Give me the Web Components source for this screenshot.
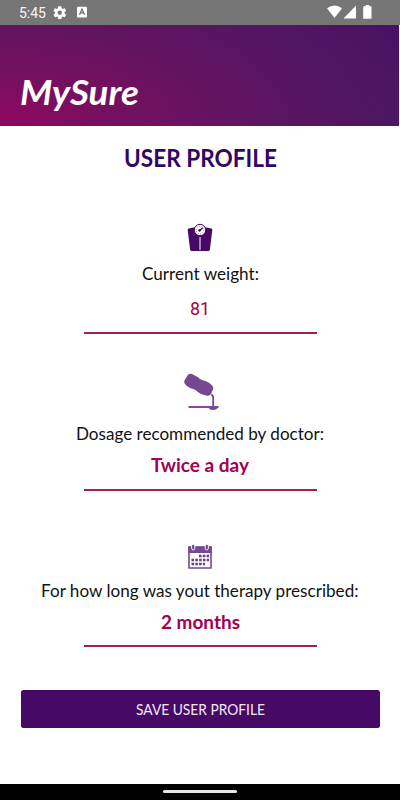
<!DOCTYPE html>
<html lang="en">
<head>
<meta charset="UTF-8">
<meta name="viewport" content="width=device-width, initial-scale=1">
<title>MySure</title>
<style>
    body {
        margin: 0;
        background: #fff;
        font-family: Lato, "Open Sans", sans-serif;
    }
</style>
</head>
<body>
<profile-screen></profile-screen>

<script>
// One line of centred text, condensed to a given width
class FitText extends HTMLElement {
    connectedCallback() {
        this.attachShadow({ mode: 'open' });
        const width = Number(this.getAttribute('width'));
        const height = Number(this.getAttribute('height'));
        const base = this.getAttribute('base');
        this.shadowRoot.innerHTML = `
            <style>
                :host { display: block; height: ${height}px; }
                svg { display: block; margin: 0 auto; overflow: visible; }
                text { fill: currentColor; }
            </style>
            <svg width="${width}" height="${height}">
                <text x="0" y="${base}" textLength="${width}" lengthAdjust="spacingAndGlyphs">${this.getAttribute('text')}</text>
            </svg>
        `;
    }
}

class StatusBar extends HTMLElement {
    connectedCallback() {
        this.attachShadow({ mode: 'open' });
        this.shadowRoot.innerHTML = `
            <style>
                :host {
                    display: flex;
                    height: 24.5px;
                    box-sizing: border-box;
                    padding: 0 28px 0 19px;
                    justify-content: space-between;
                    align-items: center;
                    background: #767676;
                    color: #fff;
                    font: 14.3px/24px Roboto, sans-serif;
                }
                .side { display: flex; align-items: center; height: 24px; }
                svg { display: block; fill: #fff; }
                .gear { margin-left: 6.5px; }
                .badge { margin-left: 11px; }
                fit-text { color: #f4f4f4; }
            </style>
            <div class="side">
                <fit-text width="27" height="24" base="18" text="5:45"></fit-text>
                <svg class="gear" width="13.5" height="13.5" viewBox="2 2 20 20"><path fill-rule="evenodd" d="M19.14 12.94a7 7 0 0 0 0-1.88l2.03-1.58a.5.5 0 0 0 .12-.61l-1.92-3.32a.5.5 0 0 0-.59-.22l-2.39.96a7 7 0 0 0-1.62-.94l-.36-2.54a.5.5 0 0 0-.48-.41h-3.84a.5.5 0 0 0-.47.41l-.36 2.54a7.4 7.4 0 0 0-1.62.94l-2.39-.96a.5.5 0 0 0-.59.22L2.74 8.87a.5.5 0 0 0 .12.61l2.03 1.58a7 7 0 0 0 0 1.88l-2.03 1.58a.5.5 0 0 0-.12.61l1.92 3.32c.12.22.37.29.59.22l2.39-.96c.5.38 1.03.7 1.62.94l.36 2.54c.05.24.24.41.48.41h3.84c.24 0 .44-.17.47-.41l.36-2.54a7 7 0 0 0 1.62-.94l2.39.96c.22.08.47 0 .59-.22l1.92-3.32a.5.5 0 0 0-.12-.61zM12 15.2a3.2 3.2 0 1 1 0-6.4 3.2 3.2 0 0 1 0 6.4z"/></svg>
                <svg class="badge" width="10" height="12" viewBox="0 0 10 12">
                    <rect y=".7" width="10" height="10.8" rx="1"/>
                    <path d="M2.5 8.8 5 3l2.5 5.8M3.5 6.9h3" fill="none" stroke="#707070" stroke-width="1.2"/>
                </svg>
            </div>
            <div class="side">
                <svg width="45" height="14" viewBox="0 0 45 14">
                    <path d="M0 3.3Q7.5-2.5 15 3.3L7.5 13z"/>
                    <path d="M29 .5V13.5H16.5z"/>
                    <path d="M37 1.2h1.7V0h3.6v1.2h1.5q.7 0 .7.7v11q0 .9-.8.9h-6.7q-.8 0-.8-.9v-11q0-.7.8-.7z"/>
                </svg>
            </div>
        `;
    }
}

class BrandHeader extends HTMLElement {
    connectedCallback() {
        this.attachShadow({ mode: 'open' });
        this.shadowRoot.innerHTML = `
            <style>
                :host {
                    display: flex;
                    align-items: flex-end;
                    box-sizing: border-box;
                    height: 101.5px;
                    margin-right: 1px;
                    padding-left: 19.5px;
                    background: radial-gradient(ellipse 450px 200px at 0 100%, #900760 0%, #751060 25%, #611461 52%, #501563 80%, rgba(70, 18, 102, 0) 110%),
                        linear-gradient(180deg, #451065, #421c63);
                    color: #fff;
                    font: italic 700 34px Lato, sans-serif;
                }
            </style>
            <fit-text width="119" height="48" base="27" text="MySure"></fit-text>
        `;
    }
}

// Icon, question and underlined answer
class ProfileField extends HTMLElement {
    connectedCallback() {
        this.attachShadow({ mode: 'open' });
        this.shadowRoot.innerHTML = `
            <style>
                :host { display: flex; flex-direction: column; align-items: center; height: 156.5px; }
                .icon { display: flex; height: 45.5px; align-items: flex-end; justify-content: center; }
                .label { color: #111; font-size: 17.2px; }
                .value {
                    box-sizing: border-box;
                    width: 233px;
                    height: 39.5px;
                    border-bottom: 2px solid #a3204f;
                    color: #a3004f;
                    font-size: 18.4px;
                    font-weight: 700;
                }
                :host([plain]) .icon { height: 41.5px; }
                :host([plain]) .value { height: 43.5px; padding-top: 3px; font-family: Roboto, sans-serif; font-weight: 400; font-size: 18.5px; }
            </style>
            <div class="icon"><slot></slot></div>
            <fit-text class="label" width="${this.getAttribute('label-width')}" height="38" base="27" text="${this.getAttribute('label')}"></fit-text>
            <div class="value">
                <fit-text width="${this.getAttribute('value-width')}" height="37" base="21.4" text="${this.getAttribute('value')}"></fit-text>
            </div>
        `;
    }
}

class SaveButton extends HTMLElement {
    connectedCallback() {
        this.attachShadow({ mode: 'open' });
        this.shadowRoot.innerHTML = `
            <style>
                :host { display: block; margin: 0 20.5px; }
                button {
                    display: block;
                    width: 100%;
                    height: 37.5px;
                    padding: 0;
                    border: 0;
                    border-radius: 2.5px;
                    background: #470966;
                    color: #f0eaf3;
                    font: 15.5px Lato, sans-serif;
                }
            </style>
            <button type="button"><fit-text width="129" height="37.5" base="24.7" text="SAVE USER PROFILE"></fit-text></button>
        `;
    }
}

class NavBar extends HTMLElement {
    connectedCallback() {
        this.attachShadow({ mode: 'open' });
        this.shadowRoot.innerHTML = `
            <style>
                :host { display: flex; height: 16.5px; margin-top: auto; background: #000; justify-content: center; align-items: center; }
                span { width: 74px; height: 3px; border-radius: 2px; background: #e6e6e6; }
            </style>
            <span></span>
        `;
    }
}

class ProfileScreen extends HTMLElement {
    connectedCallback() {
        this.attachShadow({ mode: 'open' });
        this.shadowRoot.innerHTML = `
            <style>
                :host { display: flex; flex-direction: column; width: 400px; height: 800px; overflow: hidden; }
                .title { color: #310561; font-size: 24px; font-weight: 700; }
                main { display: flex; flex-direction: column; height: 564px; }
                svg { display: block; }
                #spoon { margin: 0 -3px 2px 0; }
                #calendar { margin-bottom: 1px; }
            </style>
            <status-bar></status-bar>
            <brand-header></brand-header>
            <main>
                <fit-text class="title" width="153" height="85" base="40.7" text="USER PROFILE"></fit-text>
                <profile-field plain label="Current weight:" label-width="117" value="81" value-width="20">
                    <svg id="scale" width="26" height="30" viewBox="0 0 26 30">
                        <path d="M1.5 5.5Q6 4 13 4T24.5 5.5Q25.5 6 25.3 7L22.9 26.5Q22.7 28 21.3 28H4.7Q3.3 28 3.1 26.5L.7 7Q.5 6 1.5 5.500z" fill="#470966"/>
                        <path d="M13 14v13" stroke="#c5afce" stroke-width="1.5"/>
                        <circle cx="13" cy="7" r="5.7" fill="#fff" stroke="#470966" stroke-width="1"/>
                        <circle cx="13" cy="7" r="3.9" fill="none" stroke="#80598f" stroke-width="1" stroke-dasharray=".8 1.65"/>
                        <path d="m11.8 8.2 4-3.5" stroke="#470966" stroke-width="1.4"/>
                        <circle cx="12.7" cy="7.3" r="1.2" fill="#470966"/>
                    </svg>
                </profile-field>
                <profile-field label="Dosage recommended by doctor:" label-width="248" value="Twice a day" value-width="98">
                    <svg id="spoon" width="36" height="38" viewBox="0 0 36 38">
                        <path d="M.7 7 4 1.8Q5.500 0 8 1L14 4.200Q16 6.800 19.500 7.500Q25 8.500 28.500 13Q30 15 28.500 17.500L27 21Q25.500 23.500 22 22.500Q17 22 14 19Q11 16 6.500 15.200Q2.500 13.500 1 11Q-.3 9 .7 7z" fill="#754992"/>
                        <path d="M27.2 22Q29.2 22 29.200 25V33" fill="none" stroke="#754992" stroke-width="1.8"/>
                        <path d="M4.500 34H34.500" stroke="#650b78" stroke-width="1.5"/>
                        <path d="M24 33.500H34.500Q33 37 29 37T24 33.500" fill="#754992"/>
                    </svg>
                </profile-field>
                <profile-field label="For how long was yout therapy prescribed:" label-width="317.5" value="2 months" value-width="79">
                    <svg id="calendar" width="24" height="25" viewBox="0 0 24 25">
                        <path d="M1 3H23V24H1z" fill="#fff" stroke="#754992" stroke-width="1.6"/>
                        <path d="M.2 2.5H23.8V9H.2z" fill="#754992"/>
                        <g fill="#754992" stroke="#fff" stroke-width=".9">
                            <rect x="3.6" y=".3" width="3.2" height="5.6" rx="1.5"/><rect x="17.2" y=".3" width="3.2" height="5.6" rx="1.5"/>
                        </g>
                        <path d="M11 12h10M3.5 16H21M3.5 20H17" stroke="#6c3c8b" stroke-width="2.6" stroke-dasharray="2.6 1.2"/>
                    </svg>
                </profile-field>
            </main>
            <save-button></save-button>
            <nav-bar></nav-bar>
        `;
    }
}

customElements.define('fit-text', FitText);
customElements.define('status-bar', StatusBar);
customElements.define('brand-header', BrandHeader);
customElements.define('profile-field', ProfileField);
customElements.define('save-button', SaveButton);
customElements.define('nav-bar', NavBar);
customElements.define('profile-screen', ProfileScreen);
</script>
</body>
</html>
